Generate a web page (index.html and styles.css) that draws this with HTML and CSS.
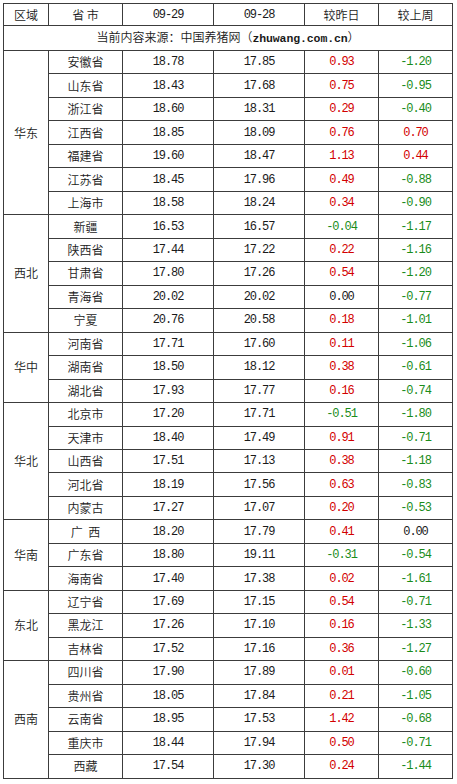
FILE: index.html
```html
<!DOCTYPE html>
<html lang="zh-CN">
<head>
<meta charset="utf-8">
<title>生猪价格</title>
<link rel="stylesheet" href="styles.css">
</head>
<body>
<div class="page">
<table class="price">
<colgroup>
<col class="c-region"><col class="c-prov"><col class="c-d1"><col class="c-d2"><col class="c-day"><col class="c-week">
</colgroup>
<thead>
<tr class="head"><th>区域</th><th>省&nbsp;市</th><th class="num">09-29</th><th class="num">09-28</th><th>较昨日</th><th>较上周</th></tr>
<tr class="source"><td colspan="6">当前内容来源：中国养猪网（<b class="url">zhuwang.com.cn</b>）</td></tr>
</thead>
<tbody>
<tr><td class="region" rowspan="7">华东</td><td>安徽省</td><td class="num">18.78</td><td class="num">17.85</td><td class="num up">0.93</td><td class="num down">-1.20</td></tr>
<tr><td>山东省</td><td class="num">18.43</td><td class="num">17.68</td><td class="num up">0.75</td><td class="num down">-0.95</td></tr>
<tr><td>浙江省</td><td class="num">18.60</td><td class="num">18.31</td><td class="num up">0.29</td><td class="num down">-0.40</td></tr>
<tr><td>江西省</td><td class="num">18.85</td><td class="num">18.09</td><td class="num up">0.76</td><td class="num up">0.70</td></tr>
<tr><td>福建省</td><td class="num">19.60</td><td class="num">18.47</td><td class="num up">1.13</td><td class="num up">0.44</td></tr>
<tr><td>江苏省</td><td class="num">18.45</td><td class="num">17.96</td><td class="num up">0.49</td><td class="num down">-0.88</td></tr>
<tr><td>上海市</td><td class="num">18.58</td><td class="num">18.24</td><td class="num up">0.34</td><td class="num down">-0.90</td></tr>

<tr><td class="region" rowspan="5">西北</td><td>新疆</td><td class="num">16.53</td><td class="num">16.57</td><td class="num down">-0.04</td><td class="num down">-1.17</td></tr>
<tr><td>陕西省</td><td class="num">17.44</td><td class="num">17.22</td><td class="num up">0.22</td><td class="num down">-1.16</td></tr>
<tr><td>甘肃省</td><td class="num">17.80</td><td class="num">17.26</td><td class="num up">0.54</td><td class="num down">-1.20</td></tr>
<tr><td>青海省</td><td class="num">20.02</td><td class="num">20.02</td><td class="num">0.00</td><td class="num down">-0.77</td></tr>
<tr><td>宁夏</td><td class="num">20.76</td><td class="num">20.58</td><td class="num up">0.18</td><td class="num down">-1.01</td></tr>

<tr><td class="region" rowspan="3">华中</td><td>河南省</td><td class="num">17.71</td><td class="num">17.60</td><td class="num up">0.11</td><td class="num down">-1.06</td></tr>
<tr><td>湖南省</td><td class="num">18.50</td><td class="num">18.12</td><td class="num up">0.38</td><td class="num down">-0.61</td></tr>
<tr><td>湖北省</td><td class="num">17.93</td><td class="num">17.77</td><td class="num up">0.16</td><td class="num down">-0.74</td></tr>

<tr><td class="region" rowspan="5">华北</td><td>北京市</td><td class="num">17.20</td><td class="num">17.71</td><td class="num down">-0.51</td><td class="num down">-1.80</td></tr>
<tr><td>天津市</td><td class="num">18.40</td><td class="num">17.49</td><td class="num up">0.91</td><td class="num down">-0.71</td></tr>
<tr><td>山西省</td><td class="num">17.51</td><td class="num">17.13</td><td class="num up">0.38</td><td class="num down">-1.18</td></tr>
<tr><td>河北省</td><td class="num">18.19</td><td class="num">17.56</td><td class="num up">0.63</td><td class="num down">-0.83</td></tr>
<tr><td>内蒙古</td><td class="num">17.27</td><td class="num">17.07</td><td class="num up">0.20</td><td class="num down">-0.53</td></tr>

<tr><td class="region" rowspan="3">华南</td><td>广&nbsp;&nbsp;西</td><td class="num">18.20</td><td class="num">17.79</td><td class="num up">0.41</td><td class="num">0.00</td></tr>
<tr><td>广东省</td><td class="num">18.80</td><td class="num">19.11</td><td class="num down">-0.31</td><td class="num down">-0.54</td></tr>
<tr><td>海南省</td><td class="num">17.40</td><td class="num">17.38</td><td class="num up">0.02</td><td class="num down">-1.61</td></tr>

<tr><td class="region" rowspan="3">东北</td><td>辽宁省</td><td class="num">17.69</td><td class="num">17.15</td><td class="num up">0.54</td><td class="num down">-0.71</td></tr>
<tr><td>黑龙江</td><td class="num">17.26</td><td class="num">17.10</td><td class="num up">0.16</td><td class="num down">-1.33</td></tr>
<tr><td>吉林省</td><td class="num">17.52</td><td class="num">17.16</td><td class="num up">0.36</td><td class="num down">-1.27</td></tr>

<tr><td class="region" rowspan="5">西南</td><td>四川省</td><td class="num">17.90</td><td class="num">17.89</td><td class="num up">0.01</td><td class="num down">-0.60</td></tr>
<tr><td>贵州省</td><td class="num">18.05</td><td class="num">17.84</td><td class="num up">0.21</td><td class="num down">-1.05</td></tr>
<tr><td>云南省</td><td class="num">18.95</td><td class="num">17.53</td><td class="num up">1.42</td><td class="num down">-0.68</td></tr>
<tr><td>重庆市</td><td class="num">18.44</td><td class="num">17.94</td><td class="num up">0.50</td><td class="num down">-0.71</td></tr>
<tr><td>西藏</td><td class="num">17.54</td><td class="num">17.30</td><td class="num up">0.24</td><td class="num down">-1.44</td></tr>
</tbody>
</table>
</div>
</body>
</html>
```
FILE: styles.css
```css
html, body {
  margin: 0;
  padding: 0;
  background: #ffffff;
}

.page {
  padding: 3px 0 0 3px;
}

.price {
  border-collapse: collapse;
  table-layout: fixed;
  width: 449px;
  font-family: "Noto Sans CJK SC", "Noto Sans", sans-serif;
  font-size: 12px;
  font-weight: 350;
  color: #1a1a1a;
}

.c-region { width: 45px; }
.c-prov { width: 74px; }
.c-d1 { width: 91px; }
.c-d2 { width: 91px; }
.c-day { width: 74px; }
.c-week { width: 74px; }

.price th,
.price td {
  border: 1px solid #3c3c3c;
  padding: 0;
  text-align: center;
  vertical-align: middle;
  font-weight: 350;
  line-height: 14px;
  white-space: nowrap;
}

.head th {
  height: 21px;
}

.source td {
  height: 24px;
}

.price tbody tr {
  height: 23.48px;
}

.price .num {
  font-family: "Liberation Mono", "DejaVu Sans Mono", monospace;
  font-size: 12px;
  font-weight: normal;
  letter-spacing: -1.1px;
}

.url {
  font-family: "Liberation Mono", monospace;
  font-weight: bold;
  font-size: 11.5px;
  letter-spacing: -0.1px;
}

.up { color: #d20000; }
.down { color: #1a8c1a; }
```
